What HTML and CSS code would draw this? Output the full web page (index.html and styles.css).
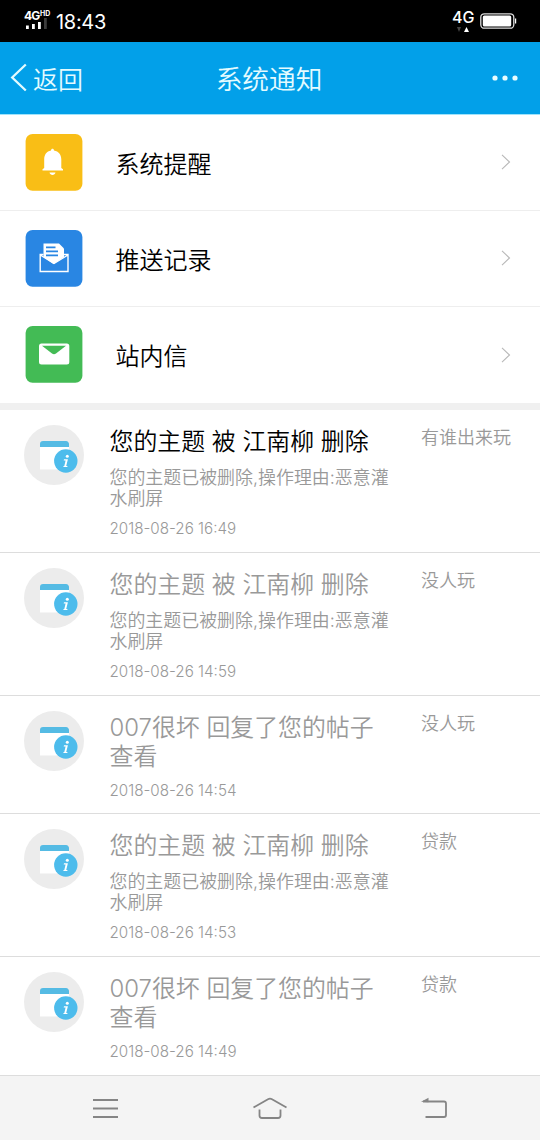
FILE: index.html
```html
<!DOCTYPE html>
<html lang="zh-CN">
<head>
<meta charset="utf-8">
<title>系统通知</title>
<link rel="stylesheet" href="styles.css">
</head>
<body>
<svg class="defs" width="0" height="0">
  <symbol id="notice" viewBox="0 0 60 60">
    <circle cx="30" cy="30" r="30" fill="#ececec"/>
    <path d="M16 21h29v23.500H16z" fill="#fff"/>
    <path d="M16 22v-3a3 3 0 0 1 3-3h23c2 0 3 2 3 3v3z" fill="#55bbe4"/>
    <circle cx="41.800" cy="36" r="11.700" fill="#4dbcec"/>
    <circle cx="43.300" cy="31.300" r="1.500" fill="#fff"/>
    <path d="M40 34.300h3.900l-1.700 6.600h1.400l-.4 1.100h-3.900l.3-1.100h.7l1.300-5.400H39.700z" fill="#fff"/>
  </symbol>
  <symbol id="chevron" viewBox="0 0 10 16">
    <path d="M1 .8 8.500 8 1 15.200" fill="none" stroke="#b8b8b8" stroke-width="1.100"/>
  </symbol>
</svg>
<div class="screen">
  <div class="status">
    <div class="signal">
      <div class="net">4G<span class="hd">HD</span></div>
      <svg class="bars" width="24" height="12" viewBox="0 0 24 12"><path d="M2 8.500h2.800V12H2zM8 7h2.800v5H8zM14 5h2.800v7H14z" fill="#fff"/><path d="M20 1h2.800v11H20z" fill="#3c3c3c"/></svg>
    </div>
    <div class="clock">18:43</div>
    <div class="data">
      <div class="data-label">4G</div>
      <svg class="arrows" width="12" height="5" viewBox="0 0 12 5"><path d="M0 0h4L2 5z" fill="#444"/><path d="M7 5h5L9.500 0z" fill="#fff"/></svg>
    </div>
    <svg class="battery" width="37" height="16" viewBox="0 0 37 16"><rect x=".8" y=".8" width="33" height="14.400" rx="3.500" fill="none" stroke="#ddd" stroke-width="1.300"/><rect x="2.800" y="2.500" width="28.400" height="11" rx="1.500" fill="#fff"/><path d="M35 5.500h1.200v5H35z" fill="#fff"/></svg>
  </div>
  <header class="header">
    <div class="back"><svg width="18" height="30" viewBox="0 0 18 30"><path d="M15.800 1.500 2.200 14.500 15.800 27.500" fill="none" stroke="#e2fbff" stroke-width="2.300"/></svg><span>返回</span></div>
    <h1 class="title">系统通知</h1>
    <svg class="more" width="26" height="6" viewBox="0 0 26 6" fill="#e8fdff"><circle cx="3" cy="3" r="2.600"/><circle cx="13" cy="3" r="2.600"/><circle cx="23" cy="3" r="2.600"/></svg>
  </header>
  <nav class="menu">
    <div class="menu-row">
      <svg class="tile" viewBox="0 0 58 58"><rect x=".6" width="56.800" height="56.800" rx="7" fill="#f9be16"/><path d="M26 16.500c0-2.400 3-2.400 3 0 4.700.8 7.300 4.300 7.300 9v8.500l1.700 1.200v1.300H17.500v-1.300l1.700-1.200v-8.500c0-4.700 2.300-8.200 6.800-9zM24.500 38.500h6c-.5 3.300-5.500 3.300-6 0z" fill="#fff"/></svg>
      <span class="menu-label">系统提醒</span><svg class="chevron"><use href="#chevron"/></svg>
    </div>
    <div class="menu-row">
      <svg class="tile" viewBox="0 0 58 58"><rect x=".6" width="56.800" height="56.800" rx="7" fill="#2986e3"/><path d="M18.500 27V13.500h15.500l5 5V27L28.500 34z" fill="#fff"/><path d="M21 17.300H30.500M21 21.300h12M21 25.300h12" stroke="#2986e3" stroke-width="1.700"/><path d="M18.500 24.500h-3.300V41.500H43V24.500H39M15.200 25 29 33.500 43 25" fill="none" stroke="#fff" stroke-width="1.400"/></svg>
      <span class="menu-label">推送记录</span><svg class="chevron"><use href="#chevron"/></svg>
    </div>
    <div class="menu-row">
      <svg class="tile" viewBox="0 0 58 58"><rect x=".6" width="56.800" height="56.800" rx="7" fill="#43bb55"/><rect x="14" y="17.500" width="30.300" height="21" rx="2.500" fill="#fff"/><path d="M17 19.800h24L31 27.500q-2 1.500-4 0z" fill="#43bb55"/></svg>
      <span class="menu-label">站内信</span><svg class="chevron"><use href="#chevron"/></svg>
    </div>
  </nav>
  <main class="list">
    <article class="item unread">
      <svg class="avatar"><use href="#notice"/></svg>
      <div class="body"><h2>您的主题 被 江南柳 删除</h2><p>您的主题已被删除,操作理由:恶意灌水刷屏</p><time>2018-08-26 16:49</time></div>
      <div class="topic">有谁出来玩</div>
    </article>
    <article class="item">
      <svg class="avatar"><use href="#notice"/></svg>
      <div class="body"><h2>您的主题 被 江南柳 删除</h2><p>您的主题已被删除,操作理由:恶意灌水刷屏</p><time>2018-08-26 14:59</time></div>
      <div class="topic">没人玩</div>
    </article>
    <article class="item short">
      <svg class="avatar"><use href="#notice"/></svg>
      <div class="body"><h2>007很坏 回复了您的帖子 查看</h2><time>2018-08-26 14:54</time></div>
      <div class="topic">没人玩</div>
    </article>
    <article class="item">
      <svg class="avatar"><use href="#notice"/></svg>
      <div class="body"><h2>您的主题 被 江南柳 删除</h2><p>您的主题已被删除,操作理由:恶意灌水刷屏</p><time>2018-08-26 14:53</time></div>
      <div class="topic">贷款</div>
    </article>
    <article class="item short">
      <svg class="avatar"><use href="#notice"/></svg>
      <div class="body"><h2>007很坏 回复了您的帖子 查看</h2><time>2018-08-26 14:49</time></div>
      <div class="topic">贷款</div>
    </article>
  </main>
  <footer class="keys">
    <svg width="36" height="24" viewBox="0 0 36 24"><path d="M6 3h25M6 11.500h25M6 20h25"/></svg>
    <svg width="36" height="24" viewBox="0 0 36 24"><path d="M1.500 10.500 16 2.200q2-1.200 4 0L34.500 10.500M7.500 12.500v6q0 2.500 2.500 2.500h16q2.500 0 2.500-2.500v-6"/></svg>
    <svg width="36" height="24" viewBox="0 0 36 24"><path d="M7 4.500H28q2 0 2 2V18q0 2-2 2H9.500"/><path class="solid" d="M5 4.700 12.500.8v4.400z"/></svg>
  </footer>
</div>
</body>
</html>
```
FILE: styles.css
```css
* { box-sizing: border-box; margin: 0; padding: 0; }
body { font-family: Inter, "Noto Sans CJK SC", sans-serif; font-weight: 350; background: #fff; }
svg { display: block; flex: none; }
.defs { position: absolute; }
.screen { width: 540px; height: 1140px; display: flex; flex-direction: column; overflow: hidden; }

.status { height: 42px; background: #000; color: #fff; display: flex; align-items: flex-start; padding: 0 23px 0 24px; }
.signal { width: 32px; padding-top: 11px; }
.net { height: 10px; font-size: 12px; line-height: 10px; font-weight: 700; white-space: nowrap; letter-spacing: -.8px; display: flex; }
.hd { font-size: 7px; line-height: 6px; letter-spacing: 0; margin-left: .5px; }
.bars { margin-top: -4px; }
.clock { font-size: 20px; line-height: 24px; padding-top: 10px; font-weight: 400; letter-spacing: -.3px; }
.data { margin-left: auto; padding-top: 9px; width: 28px; }
.data-label { font-size: 16px; line-height: 17px; font-weight: 500; }
.arrows { margin: 1px 0 0 5px; }
.battery { margin: 13px 0 0; }

.header { height: 73px; background: #02a0e9; color: #e4fbff; display: grid; grid-template-columns: 1fr auto 1fr; align-items: center; padding: 0 22px 0 10px; border-bottom: 1px solid #9fe3fb; }
.back { display: flex; align-items: center; gap: 5px; font-size: 25px; }
.title { font-size: 26.700px; font-weight: 350; padding: 0 0 2px 10px; }
.more { justify-self: end; }

.menu { border-bottom: 7px solid #f0f0f0; }
.menu-row { height: 96px; display: flex; align-items: center; padding: 0 29px 0 25px; border-bottom: 1px solid #eee; }
.menu-row:last-child { border-bottom: 0; }
.tile { width: 58px; height: 58px; }
.menu-label { margin-left: 32.500px; font-size: 24px; color: #000; padding-bottom: 1px; }
.chevron { margin: 0 0 1px auto; width: 10px; height: 16px; }

.item { height: 143px; display: flex; padding: 15px 12px 0 24px; border-bottom: 1px solid #ddd; color: #999; }
.item.short { height: 118.400px; }
.avatar { width: 60px; height: 60px; }
.body { width: 285px; margin-left: 25.500px; }
.body h2 { font-size: 23.900px; line-height: 28.500px; font-weight: 350; padding-top: 3px; }
.unread h2 { color: #000; }
.body p { font-size: 17.950px; line-height: 21px; margin-top: 10.500px; }
.body time { display: block; font-size: 15.200px; line-height: 20px; margin-top: 10px; }
.short time { margin-top: 9.500px; }
.topic { margin-left: 26.500px; font-size: 18px; line-height: 26px; white-space: nowrap; }

.keys { flex: 1; background: #f4f4f4; display: flex; justify-content: space-between; padding: 21px 88px 0 87px; }
.keys path { fill: none; stroke: #858585; stroke-width: 1.800; }
.keys .solid { fill: #858585; stroke: none; }
```
